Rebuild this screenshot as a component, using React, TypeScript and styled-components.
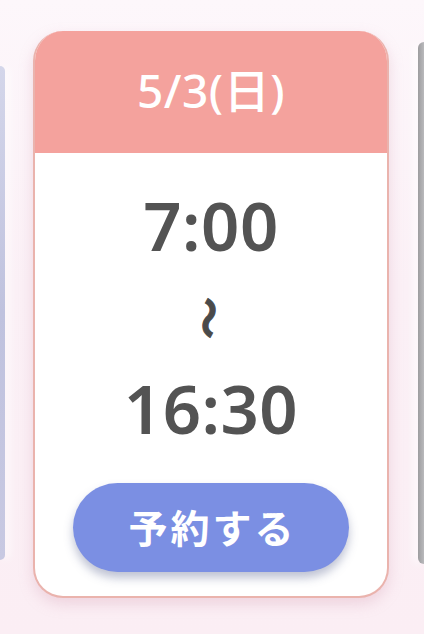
import { createGlobalStyle } from 'styled-components';
import styled from 'styled-components';

const GlobalStyle = createGlobalStyle`
  html, body {
    margin: 0;
    padding: 0;
    background: #fbf1f6;
  }
  body {
    font-family: 'Noto Sans CJK JP', 'Noto Sans', sans-serif;
  }
`;

const Page = styled.div`
  width: 424px;
  height: 634px;
  overflow: hidden;
  display: flex;
  align-items: flex-start;
  background: linear-gradient(180deg, #fdf7fb 0%, #fbf0f6 45%, #fbeef4 100%);
`;

const Peek = styled.div<{ $side: 'left' | 'right' }>`
  flex: none;
  width: ${(p) => (p.$side === 'left' ? '5px' : '6px')};
  margin-top: ${(p) => (p.$side === 'left' ? '66px' : '42px')};
  height: ${(p) => (p.$side === 'left' ? '494px' : '522px')};
  margin-left: ${(p) => (p.$side === 'left' ? '0' : '29px')};
  margin-right: ${(p) => (p.$side === 'left' ? '28px' : '0')};
  border-radius: ${(p) => (p.$side === 'left' ? '0 6px 6px 0' : '8px 0 0 8px')};
  background: ${(p) =>
    p.$side === 'left'
      ? 'linear-gradient(180deg, #d4d6ea 0%, #bfc2de 50%, #c8c9e2 100%)'
      : 'linear-gradient(90deg, #9d9d9f 0%, #b9b9bc 100%)'};
  box-shadow: ${(p) =>
    p.$side === 'left' ? '4px 0 8px rgba(255,255,255,0.9)' : '-4px 0 8px rgba(255,255,255,0.9)'};
`;

const Card = styled.div`
  flex: none;
  width: 356px;
  height: 567px;
  margin-top: 31px;
  box-sizing: border-box;
  border-radius: 30px;
  overflow: hidden;
  background: #fff;
  border: 2px solid #eab3ad;
  border-top: none;
  box-shadow: 0 6px 14px rgba(214, 160, 180, 0.35);
  display: flex;
  flex-direction: column;
`;

const Header = styled.div`
  height: 122px;
  margin: 0 -2px;
  background: #f4a29d;
  color: #fff;
  display: flex;
  align-items: center;
  justify-content: center;
  font-family: 'Noto Sans', 'Noto Sans CJK JP', sans-serif;
  font-size: 46px;
  font-weight: 500;
  letter-spacing: 0.5px;
  padding-bottom: 8px;
  box-sizing: border-box;
`;

const Body = styled.div`
  flex: 1;
  display: flex;
  flex-direction: column;
  align-items: center;
  padding-top: 40px;
`;

const Time = styled.div<{ $gap?: number }>`
  font-family: 'Noto Sans', 'Noto Sans CJK JP', sans-serif;
  font-size: 67px;
  font-weight: 600;
  line-height: 65px;
  color: #535353;
  letter-spacing: 0.5px;
  margin-top: ${(p) => p.$gap ?? 0}px;
`;

const Wave = styled.div`
  margin-top: 42px;
  height: 36px;
  width: 44px;
  display: flex;
  align-items: center;
  justify-content: center;
  font-size: 42px;
  font-weight: 700;
  line-height: 1;
  color: #4a4a4a;
  transform: rotate(90deg);
  -webkit-text-stroke: 1px #4a4a4a;
`;

const Button = styled.button`
  margin-top: 42px;
  width: 276px;
  height: 89px;
  border: none;
  border-radius: 45px;
  background: #7b8fe3;
  color: #fff;
  font-family: inherit;
  font-size: 39px;
  font-weight: 700;
  letter-spacing: 3px;
  box-shadow: 0 6px 10px rgba(70, 80, 130, 0.35);
  display: flex;
  align-items: center;
  justify-content: center;
  padding: 0 0 4px 3px;
`;

export default function App() {
  return (
    <>
      <GlobalStyle />
      <Page>
        <Peek $side="left" />
        <Card>
          <Header>5/3(日)</Header>
          <Body>
            <Time>7:00</Time>
            <Wave>〜</Wave>
            <Time $gap={40}>16:30</Time>
            <Button>予約する</Button>
          </Body>
        </Card>
        <Peek $side="right" />
      </Page>
    </>
  );
}
